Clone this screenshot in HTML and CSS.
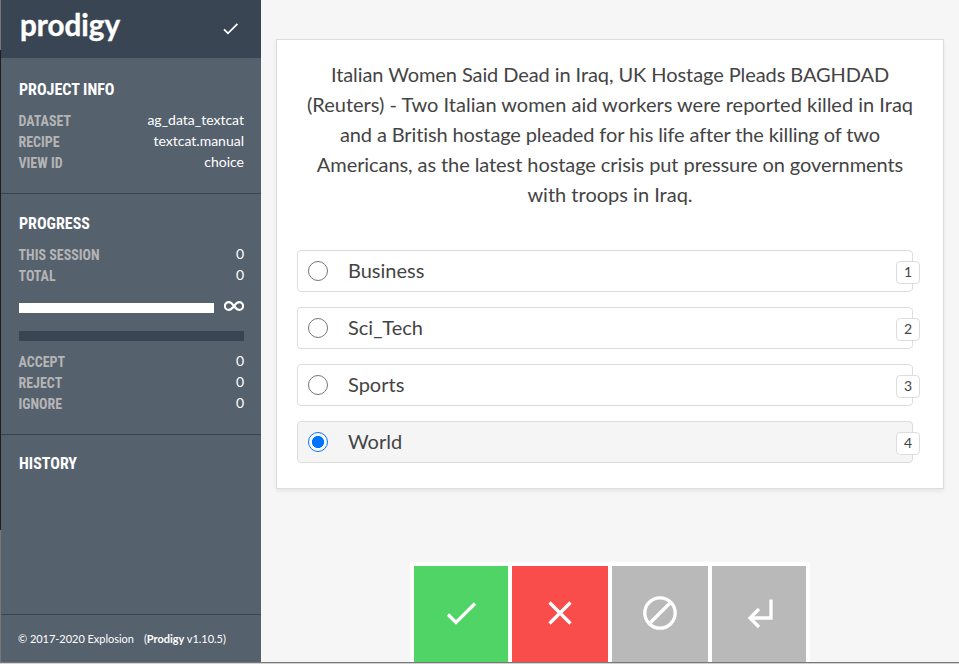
FILE: index.html
```html
<!DOCTYPE html>
<html lang="en">
<head>
<meta charset="utf-8">
<title>Prodigy</title>
<link rel="stylesheet" href="styles.css">
</head>
<body>
<div class="app">
  <div class="edge"></div>
  <aside class="sidebar">
    <header class="brand">
      <svg class="logo" width="110" height="58" viewBox="0 0 110 58"><text x="1" y="36" textLength="100" lengthAdjust="spacingAndGlyphs">prodigy</text></svg>
      <svg class="saved" width="16" height="12" viewBox="0 0 16 12"><path d="M1 6.3 5 10.3 14.4 .9"/></svg>
    </header>
    <section class="info">
      <h2><span>PROJECT INFO</span></h2>
      <dl>
        <div><dt>DATASET</dt><dd>ag_data_textcat</dd></div>
        <div><dt>RECIPE</dt><dd>textcat.manual</dd></div>
        <div><dt>VIEW ID</dt><dd>choice</dd></div>
      </dl>
    </section>
    <section class="progress">
      <h2><span>PROGRESS</span></h2>
      <dl>
        <div><dt>THIS SESSION</dt><dd>0</dd></div>
        <div><dt>TOTAL</dt><dd>0</dd></div>
      </dl>
      <div class="meter">
        <div class="bar"></div>
        <svg width="20" height="10" viewBox="0 0 20 10"><path d="M10 5C8.2 2.6 6.9 1.1 4.8 1.1a3.9 3.9 0 0 0 0 7.8C6.9 8.9 8.2 7.4 10 5s3.1-3.9 5.2-3.9a3.9 3.9 0 0 1 0 7.8C13.1 8.9 11.800 7.4 10 5Z"/></svg>
      </div>
      <div class="track"></div>
      <dl>
        <div><dt>ACCEPT</dt><dd>0</dd></div>
        <div><dt>REJECT</dt><dd>0</dd></div>
        <div><dt>IGNORE</dt><dd>0</dd></div>
      </dl>
    </section>
    <section class="history"><h2><span>HISTORY</span></h2></section>
    <footer><span>© 2017-2020 Explosion</span><span>(<b>Prodigy</b> v1.10.5)</span></footer>
  </aside>
  <main>
    <article class="card">
      <p><span class="snug">Italian Women Said Dead in Iraq, UK Hostage Pleads BAGHDAD</span><br>(Reuters) - Two Italian women aid workers were reported killed in Iraq<br><span class="tight">and a British hostage pleaded for his life after the killing of two</span><br><span class="snug">Americans, as the latest hostage crisis put pressure on governments</span><br>with troops in Iraq.</p>
      <div class="options">
        <label class="option"><i class="radio"></i><span>Business</span><kbd>1</kbd></label>
        <label class="option"><i class="radio"></i><span>Sci_Tech</span><kbd>2</kbd></label>
        <label class="option"><i class="radio"></i><span>Sports</span><kbd>3</kbd></label>
        <label class="option selected"><i class="radio"></i><span>World</span><kbd>4</kbd></label>
      </div>
    </article>
    <div class="actions">
      <button class="accept"><svg width="94" height="96" viewBox="0 0 94 96"><path d="M34 48.5 42 56.5 61 37.5"/></svg></button>
      <button class="reject"><svg width="96" height="96" viewBox="0 0 96 96"><path d="M37.5 36.5 58.5 57.5M58.5 36.5 37.5 57.5"/></svg></button>
      <button class="ignore"><svg width="96" height="96" viewBox="0 0 96 96"><circle cx="48" cy="47" r="15.200"/><path d="M37.5 57.5 58.5 36.5"/></svg></button>
      <button class="undo"><svg width="94" height="96" viewBox="0 0 94 96"><path d="M59 33.5V52H38M47 43 38 52 47 61"/></svg></button>
    </div>
  </main>
</div>
</body>
</html>
```
FILE: styles.css
```css
* { box-sizing: border-box; }
body { margin: 0; background: #d2d2d2; font-family: Lato, sans-serif; color: #444; overflow: hidden; }
.app { display: flex; height: 663px; border-bottom: 1px solid #777; background: #f6f6f6; }
.edge { width: 1px; background: linear-gradient(#777 50px, #1c1e20 50px 530px, #777 530px); }
.sidebar { width: 260px; background: #56616e; color: #fff; display: flex; flex-direction: column; }
.brand { height: 58px; background: #3a4553; display: flex; justify-content: space-between; padding: 0 22px 0 18px; }
.logo text { font: 700 31px Lato, sans-serif; fill: #fff; stroke: #fff; stroke-width: .4; }
.saved { margin-top: 23px; fill: none; stroke: #fff; stroke-width: 1.8; }
section { padding: 0 17px 0 18px; border-bottom: 1px solid #3a4553; }
.info { height: 136px; padding-top: 22px; }
.progress { height: 241px; padding-top: 20px; }
.history { flex: 1; padding-top: 19px; }
h2 { margin: 0 0 10px; font: 700 16px/20px "Roboto Condensed", Roboto, sans-serif; font-stretch: 75%; }
dl { margin: 0; }
dl div { display: flex; justify-content: space-between; height: 21px; line-height: 19px; }
dt { font: 700 14px/23px "Roboto Condensed", Roboto, sans-serif; font-stretch: 75%; color: #b5b5b5; margin-left: -.5px; }
dd { margin: 0; font-size: 14px; }
.meter { display: flex; justify-content: space-between; height: 26px; margin-top: 14px; }
.bar { width: 195px; height: 10px; margin-top: 3px; background: #fff; }
.meter svg { fill: none; stroke: #fff; stroke-width: 2.1; margin-top: 1px; }
.track { height: 10px; margin: 5px 0 10px; background: #3a4553; }
footer { height: 47px; padding-left: 17px; display: flex; align-items: center; gap: 10px; font-size: 11px; letter-spacing: -.03px; }
main { flex: 1; padding: 39px 15px 0; display: flex; flex-direction: column; justify-content: space-between; align-items: center; }
.card { width: 668px; height: 450px; background: #fff; border: 1px solid #ddd; box-shadow: 0 2px 4px rgba(0,0,0,.07); padding: 19px 20px; }
.card p { margin: 0 0 41px; font-size: 20px; line-height: 30px; text-align: center; white-space: nowrap; }
.snug { letter-spacing: -.08px; }
.tight { letter-spacing: -.115px; }
.options { width: 616px; display: grid; gap: 15px; }
.option { height: 42px; border: 1px solid #ddd; border-radius: 4px; display: flex; align-items: center; padding-left: 10px; font-size: 20px; position: relative; }
.option span { margin: -2px 0 0 20px; }
.selected { background: #f5f5f5; }
.radio { width: 20px; height: 20px; border: 1px solid #767676; border-radius: 50%; background: #fff; }
.selected .radio { border-color: #0075ff; background: radial-gradient(circle, #0075ff 5.8px, #fff 6.3px); }
kbd { position: absolute; right: -8px; top: 10px; width: 24px; height: 23px; border: 1px solid #ddd; border-radius: 4px; background: #fff; font: 14px/20px Lato, sans-serif; text-align: center; }
.actions { display: flex; gap: 4px; padding: 4px 4px 0; background: #fff; height: 100px; }
button { border: 0; padding: 0; height: 96px; }
button svg { display: block; fill: none; stroke: #fff; stroke-width: 3.3; }
.accept { background: #51d466; }
.reject { background: #f94d4b; }
.ignore, .undo { background: #b9b9b9; }
```
